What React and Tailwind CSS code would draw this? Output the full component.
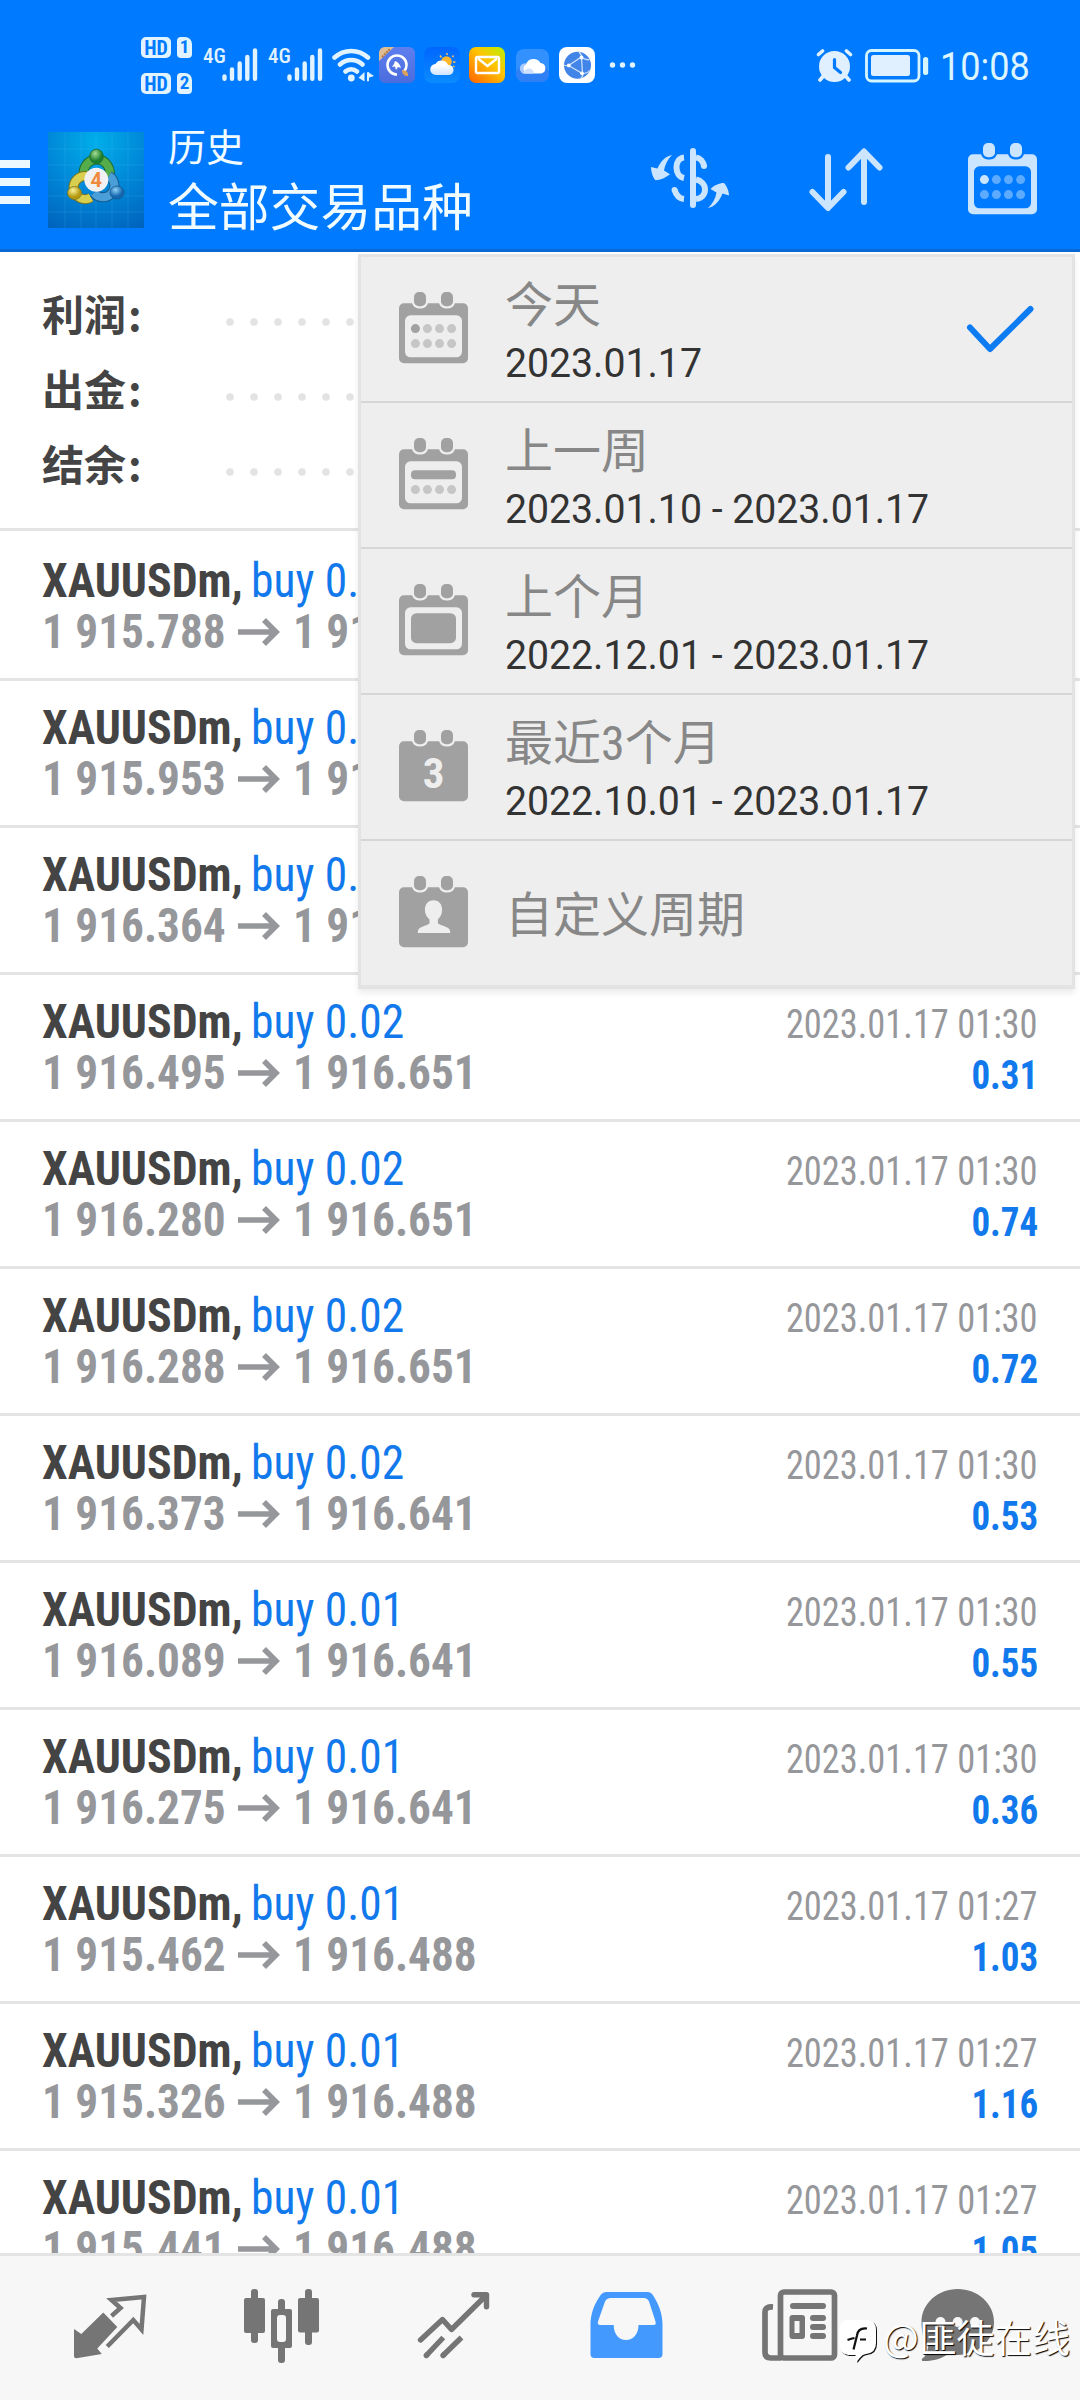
const trades = [
  ["0.02", "1 915.788", "1 916.651", "2023.01.17 01:30", "0.86"],
  ["0.02", "1 915.953", "1 916.651", "2023.01.17 01:30", "0.69"],
  ["0.02", "1 916.364", "1 916.651", "2023.01.17 01:30", "0.57"],
  ["0.02", "1 916.495", "1 916.651", "2023.01.17 01:30", "0.31"],
  ["0.02", "1 916.280", "1 916.651", "2023.01.17 01:30", "0.74"],
  ["0.02", "1 916.288", "1 916.651", "2023.01.17 01:30", "0.72"],
  ["0.02", "1 916.373", "1 916.641", "2023.01.17 01:30", "0.53"],
  ["0.01", "1 916.089", "1 916.641", "2023.01.17 01:30", "0.55"],
  ["0.01", "1 916.275", "1 916.641", "2023.01.17 01:30", "0.36"],
  ["0.01", "1 915.462", "1 916.488", "2023.01.17 01:27", "1.03"],
  ["0.01", "1 915.326", "1 916.488", "2023.01.17 01:27", "1.16"],
  ["0.01", "1 915.441", "1 916.488", "2023.01.17 01:27", "1.05"],
];

const periods = [
  ["day", "今天", "2023.01.17"],
  ["week", "上一周", "2023.01.10 - 2023.01.17"],
  ["month", "上个月", "2022.12.01 - 2023.01.17"],
  ["three", "最近3个月", "2022.10.01 - 2023.01.17"],
  ["custom", "自定义周期", null],
];

function Calendar({ kind, color, dim, bg }) {
  const solid = kind === "three" || kind === "custom";
  return (
    <svg viewBox="0 0 69 72" className="h-[72px] w-[69px] shrink-0">
      <rect x="0" y="11.3" width="69" height="60" rx="5" fill={color} />
      <g fill={color} stroke={bg} strokeWidth="4.4" paintOrder="stroke">
        <rect x="15" y="0" width="12" height="14.3" rx="5" />
        <rect x="42" y="0" width="12" height="14.3" rx="5" />
      </g>
      {!solid && <rect x="6" y="23.3" width="57" height="42" rx="5.5" fill={bg} />}
      {kind === "day" && (
        <g fill={dim}>
          <circle cx="16.4" cy="36.6" r="4.5" fill={color} />
          <circle cx="28.4" cy="36.6" r="4.5" />
          <circle cx="40.5" cy="36.6" r="4.5" />
          <circle cx="52.6" cy="36.6" r="4.5" />
        </g>
      )}
      {kind === "week" && <rect x="12" y="32.2" width="45" height="9" rx="4" fill={color} />}
      {(kind === "day" || kind === "week") && (
        <g fill={dim}>
          <circle cx="16.4" cy="51.6" r="4.5" />
          <circle cx="28.4" cy="51.6" r="4.5" />
          <circle cx="40.5" cy="51.6" r="4.5" />
          <circle cx="52.6" cy="51.6" r="4.5" />
        </g>
      )}
      {kind === "month" && <rect x="12" y="29.2" width="45" height="30" rx="5.5" fill={color} />}
      {kind === "three" && (
        <text x="34.5" y="57.5" textAnchor="middle" fontSize="43" fill={bg} className="font-[Roboto] font-bold [font-stretch:75%]">3</text>
      )}
      {kind === "custom" && (
        <path
          d="M34.5 24.2c5.5 0 8.6 4 8.6 9.6 0 4.6-1.8 7.2-4.2 9.6v4.2c3.6 2.5 12.3 3.2 12.3 8v1.5H18.8v-1.5c0-4.8 8.7-5.5 11.7-8v-4.2c-2.6-2.4-4.6-5-4.6-9.6 0-5.6 3.100-9.600 8.600-9.600z"
          fill={bg}
        />
      )}
    </svg>
  );
}

function HdBadge({ n }) {
  return (
    <div className="flex gap-[6px] font-[Roboto] text-[#007aff]">
      <div className="flex h-[21px] w-[30px] items-center justify-center rounded-[5px] bg-[#e0f3ff] text-[20px] font-bold [font-stretch:75%]">HD</div>
      <div className="flex h-[21px] w-[15px] items-center justify-center rounded-[4px] rounded-tr-[7px] bg-[#e0f3ff] text-[19px] font-bold [font-stretch:75%]">{n}</div>
    </div>
  );
}

function Signal() {
  return (
    <div className="flex h-[34px] w-[53px]">
      <span className="ml-[-1px] w-[19px] font-[Roboto] text-[21px] leading-[16px] font-medium whitespace-nowrap text-[#e0f3ff] [font-stretch:75%]">4G</span>
      <svg viewBox="222 48 36 34" className="h-[34px] w-[36px] shrink-0" stroke="#e0f3ff" strokeWidth="4.4" strokeLinecap="round">
        <path d="M224.5 76.500v2.300M232 69.500v9.300M239.700 63.500v15.300M247.300 57v21.800M255 50.500v28.300" />
      </svg>
    </div>
  );
}

function StatusBar() {
  return (
    <div className="flex h-[130px] items-start pl-[141px]">
      <div className="mt-[37px] flex w-[63px] flex-col gap-[15px]">
        <HdBadge n="1" />
        <HdBadge n="2" />
      </div>
      <div className="mt-[48px] flex gap-[12px]">
        <Signal />
        <Signal />
      </div>
      <svg viewBox="332 48 42 34" className="mt-[48px] ml-[10px] h-[34px] w-[42px]" fill="none" stroke="#e0f3ff" strokeWidth="4.5" strokeLinecap="round">
        <path d="M334.500 57.500a24.500 24.500 0 0 1 33.500 0M340 64.500a16.500 16.500 0 0 1 22.500 0M345.500 71.500a8.500 8.500 0 0 1 11.500 0" />
        <circle cx="351.3" cy="78" r="3.4" fill="#e0f3ff" stroke="none" />
        <path d="M364.500 72v9.500l-6-3.700zM368 72l6 4-6 2z" fill="#e0f3ff" stroke="none" />
        <path d="M368 73v7.500" strokeWidth="2" />
      </svg>

      <svg viewBox="379 47 36 36" className="mt-[47px] ml-[5px] h-[36px] w-[36px]">
        <defs>
          <linearGradient id="browser" x1="0" y1="0" x2="0" y2="1">
            <stop offset="0" stopColor="#5f7ff0" />
            <stop offset="1" stopColor="#4a6cdc" />
          </linearGradient>
          <clipPath id="browserClip"><rect x="379" y="47" width="36" height="36" rx="6" /></clipPath>
        </defs>
        <rect x="379" y="47" width="36" height="36" rx="6" fill="url(#browser)" />
        <path d="M379 47h15l-15 14z" fill="#e0bd94" clipPath="url(#browserClip)" />
        <path d="M382 57l8-8" stroke="#b0793c" strokeWidth="2" strokeDasharray="2 1" />
        <path d="M397 74.500a9.500 9.500 0 1 1 9.500-9.500c0 3-1 5-2.500 6.500" fill="none" stroke="#fff" strokeWidth="2.6" />
        <path d="M395 61c3 1 5 3.500 6 7l-3-1-2 3-1-3.500-3 .5 2-3z" fill="#fff" />
        <path d="M402 70c4 0 6.500 2 6 6-4 0-6-2-6-6z" fill="#dba25a" />
      </svg>
      <svg viewBox="424 47 36 36" className="mt-[47px] ml-[9px] h-[36px] w-[36px]">
        <defs>
          <linearGradient id="weather" x1="0" y1="0" x2="0" y2="1">
            <stop offset="0" stopColor="#0066ff" />
            <stop offset="1" stopColor="#0a8cff" />
          </linearGradient>
          <linearGradient id="cloud" x1="0" y1="0" x2="0" y2="1">
            <stop offset=".3" stopColor="#fff" />
            <stop offset="1" stopColor="#cfe4ff" />
          </linearGradient>
        </defs>
        <rect x="424" y="47" width="36" height="36" rx="8" fill="url(#weather)" />
        <path d="M447 53v2M453.500 55.500l-1 1.500M455.500 62h-2.500M440 55.500l1.500 2M454.500 67l-1.500-1" stroke="#ffc34d" strokeWidth="1.4" />
        <circle cx="446.5" cy="61.5" r="5.3" fill="#ffb62e" />
        <path d="M436 75a5.500 5.500 0 0 1-.5-11 7 7 0 0 1 12.500 1 5 5 0 0 1 1 10z" fill="url(#cloud)" />
      </svg>
      <svg viewBox="469 47 36 36" className="mt-[47px] ml-[9px] h-[36px] w-[36px]">
        <defs>
          <linearGradient id="mail" x1="1" y1="0" x2=".1" y2="1">
            <stop offset="0" stopColor="#b8f000" />
            <stop offset=".45" stopColor="#ffc400" />
            <stop offset="1" stopColor="#ff6a00" />
          </linearGradient>
        </defs>
        <rect x="469" y="47" width="36" height="36" rx="7" fill="url(#mail)" />
        <rect x="476" y="57" width="23" height="16" rx="1.5" fill="none" stroke="#fff" strokeWidth="2.4" />
        <path d="M478 58.500l9.500 7.500 9.500-7.500" fill="none" stroke="#fff" strokeWidth="2.4" />
      </svg>
      <svg viewBox="516 49 33 33" className="mt-[49px] ml-[11px] h-[33px] w-[33px]">
        <rect x="516" y="49" width="33" height="33" rx="8" fill="#3391ff" />
        <rect x="516" y="66" width="33" height="16" rx="8" fill="#2f80f5" />
        <circle cx="525" cy="68.5" r="5.2" fill="#a9cbff" />
        <path d="M527 73.500a5 5 0 0 1-1-9 8 8 0 0 1 14.500-1.500 5.300 5.300 0 0 1 .5 10.500z" fill="#fff" />
        <path d="M523 73.500c2-6 9-7 11-1l-1 1z" fill="#cfe0ff" />
      </svg>
      <svg viewBox="559 47 36 36" className="mt-[47px] ml-[10px] h-[36px] w-[36px]">
        <rect x="559" y="47" width="36" height="36" rx="8" fill="#fff" />
        <circle cx="577.5" cy="65.3" r="13.5" fill="#4285e8" />
        <path d="M568.500 65.500l13-8.500 1 16.500zM579 52q3 3 2.500 5.500 5 3 8 2M568.500 65.500q-4 .5-5-1M582.500 73.500q1 3-2 5M582.500 73.500q5 0 7-3" fill="none" stroke="#c9defb" strokeWidth="1.3" />
        <g fill="#fff"><circle cx="568.8" cy="65.4" r="1.9" /><circle cx="581.5" cy="57.5" r="1.9" /><circle cx="582" cy="73.3" r="1.9" /></g>
      </svg>
      <svg viewBox="608 60 30 10" className="mt-[60px] ml-[13px] h-[10px] w-[30px]" fill="#e0f3ff">
        <circle cx="612.5" cy="65" r="2.7" /><circle cx="622.5" cy="65" r="2.7" /><circle cx="632.5" cy="65" r="2.7" />
      </svg>

      <svg viewBox="816 48 37 35" className="mt-[48px] ml-[178px] h-[35px] w-[37px]" fill="none" strokeLinecap="round">
        <circle cx="834.5" cy="66.5" r="15.5" fill="#e0f0ff" />
        <path d="M834.500 59.500v8l6 5" stroke="#007aff" strokeWidth="3.2" />
        <path d="M818.500 54.500l4-3.500M850.500 54.500l-4-3.500M823 76.500l-3 3.500M846 76.500l3 3.500" stroke="#e0f0ff" strokeWidth="3.6" />
      </svg>
      <svg viewBox="865 48 64 35" className="mt-[48px] ml-[12px] h-[35px] w-[64px]">
        <rect x="866.5" y="50.5" width="52.5" height="30.5" rx="5" fill="none" stroke="#d5f5ff" strokeWidth="2.8" />
        <rect x="871" y="55" width="39" height="21" rx="2.5" fill="#e0f0ff" />
        <rect x="923" y="57" width="5.2" height="18" rx="2.5" fill="#d5f5ff" />
      </svg>
      <div className="mt-[43px] ml-[11px] origin-left scale-x-[0.95] font-[Roboto] text-[38px] leading-[49px] whitespace-nowrap text-[#dcf5ff]">10:08</div>
    </div>
  );
}

function AppLogo() {
  return (
    <svg viewBox="0 0 96 96" className="h-[96px] w-[96px]">
      <defs>
        <radialGradient id="logoBg" cx=".5" cy=".1" r="1">
          <stop offset="0" stopColor="#00aeea" />
          <stop offset=".5" stopColor="#0088d8" />
          <stop offset="1" stopColor="#0064be" />
        </radialGradient>
        <radialGradient id="g" cx=".4" cy=".3"><stop offset="0" stopColor="#a5dc94" /><stop offset="1" stopColor="#1d7f2e" /></radialGradient>
        <radialGradient id="y" cx=".4" cy=".3"><stop offset="0" stopColor="#fbf49b" /><stop offset="1" stopColor="#b79a12" /></radialGradient>
        <radialGradient id="b" cx=".4" cy=".3"><stop offset="0" stopColor="#8fd0f5" /><stop offset="1" stopColor="#1466b0" /></radialGradient>
      </defs>
      <rect width="96" height="96" fill="url(#logoBg)" />
      <path d="M0 17h96M0 33h96M0 48h96M0 64h96M0 80h96M17 0v96M33 0v96M48 0v96M64 0v96M80 0v96" stroke="#5cc8ff" strokeOpacity=".16" strokeWidth="1" />
      <g fill="none">
        <path d="M36.500 45a13 13 0 1 1 24 1" stroke="#1d6a2c" strokeWidth="10" />
        <path d="M36.500 45a13 13 0 1 1 24 1" stroke="#55ac4a" strokeWidth="8" />
        <path d="M43 65.500a11.500 11.500 0 1 1-3-21" stroke="#7c7420" strokeWidth="10" />
        <path d="M43 65.500a11.500 11.500 0 1 1-3-21" stroke="#d8cf4e" strokeWidth="8" />
        <path d="M61 44a11.500 11.500 0 1 1-15 17" stroke="#17598f" strokeWidth="10" />
        <path d="M61 44a11.500 11.500 0 1 1-15 17" stroke="#4a9fd8" strokeWidth="8" />
      </g>
      <ellipse cx="48.5" cy="24.5" rx="6.8" ry="7.3" fill="url(#g)" stroke="#1d6a2c" strokeWidth=".8" />
      <ellipse cx="26.5" cy="61" rx="7" ry="6.500" fill="url(#y)" stroke="#7c7420" strokeWidth=".8" />
      <ellipse cx="69" cy="60.5" rx="7" ry="6.500" fill="url(#b)" stroke="#17598f" strokeWidth=".8" />
      <circle cx="48.3" cy="47.7" r="12" fill="#f1f1f4" />
      <text x="48.3" y="55" textAnchor="middle" fontSize="20" fill="#f08a3c" className="font-[Roboto] font-bold">4</text>
    </svg>
  );
}

function Toolbar() {
  return (
    <div className="flex h-[119px] items-start">
      <div className="mt-[30px] flex w-[48px] flex-col gap-[10px]">
        <div className="h-[8px] w-[30px] bg-[#ecf8ff]" />
        <div className="h-[8px] w-[30px] bg-[#ecf8ff]" />
        <div className="h-[8px] w-[30px] bg-[#ecf8ff]" />
      </div>
      <div className="mt-[2px]"><AppLogo /></div>
      <div className="ml-[24px] w-[483px] font-[Roboto,'Noto_Sans_CJK_SC',sans-serif] whitespace-nowrap text-[#f0fcff]">
        <div className="mt-[-8px] text-[38px] leading-[52px]">历史</div>
        <div className="mt-[5px] text-[50.8px] leading-[60px]">全部交易品种</div>
      </div>
      <svg viewBox="650 147 81 63" className="mt-[17px] ml-[-1px] h-[63px] w-[81px]" fill="none" stroke="#cbe5ff" strokeWidth="6">
        <path d="M693 151v54" strokeLinecap="round" />
        <path d="M684 157.500c-5 .5-7.500 5-7.500 10s2.500 9.500 7.500 10.500M674.500 189.500c1.500 5.500 4.500 9 9.500 9.500" />
        <circle cx="674.500" cy="190" r="2.9" fill="#cbe5ff" stroke="none" />
        <path d="M696 157.500c4 .5 7.500 4 8 9M696 179.500c5 1 9 5 9 10s-3.500 9-9 9.500" />
        <circle cx="704" cy="166" r="3" fill="#cbe5ff" stroke="none" />
        <path d="M672 155c-7 1.500-11.500 6.500-14.500 13.500l-6.500-1.500c0 4 1.500 10 4.500 13.300 5-.3 10.500-2.600 14.500-6l-6-3.800c1-6 3.500-11 8-15.500z" fill="#cbe5ff" stroke="none" />
        <path d="M708 208c7-1.500 11.500-7 14.500-14.500l6.500 2c0-4-2-9.500-5-12.500-5 0-10 2.500-13.500 6l6 3.500c-1 6-4 11.500-8.500 15.500z" fill="#cbe5ff" stroke="none" />
      </svg>
      <svg viewBox="808 146 76 66" className="mt-[16px] ml-[77px] h-[66px] w-[76px]" fill="none" stroke="#cbe5ff" strokeWidth="6" strokeLinecap="round" strokeLinejoin="round">
        <path d="M828 157v50M812.500 192l15.500 16 15.500-16M864 202v-50M848.500 167.500l15.500-16 15.500 16" />
      </svg>
      <div className="mt-[12.500px] ml-[84px]">
        <Calendar kind="day" color="#cbe5ff" dim="#5cabff" bg="#007aff" />
      </div>
    </div>
  );
}

function SummaryRow({ label }) {
  return (
    <div className="flex h-[75px] items-center">
      <span className="w-[184px] font-['Noto_Sans_CJK_SC',sans-serif] text-[42px] leading-[75px] font-bold text-[#444]">
        {label}<span className="ml-[2px]">:</span>
      </span>
      <svg viewBox="0 0 808 8" className="mt-[19px] h-[8px] w-[808px]">
        <path d="M4 4h804" stroke="#e3e3e3" strokeWidth="7.6" strokeLinecap="round" strokeDasharray="0 24" />
      </svg>
    </div>
  );
}

function TradeRow({ t }) {
  const [lot, open, close, time, profit] = t;
  return (
    <div className="h-[147px] shrink-0 border-b-[3px] border-[#e4e4e4] pt-[21px] pr-[42px] pl-[42px] font-[Roboto] text-[48px] leading-[51px] whitespace-nowrap [font-stretch:75%]">
      <div className="flex h-[51px] items-baseline">
        <span className="w-[208.500px] font-bold text-[#444]"><span className="inline-block origin-left scale-x-[0.955]">XAUUSDm,</span></span>
        <span className="inline-block origin-left scale-x-[0.948] text-[#1279ec]">buy {lot}</span>
        <span className="ml-auto inline-block origin-right scale-x-[0.91] text-[40px] text-[#96979b]">{time}</span>
      </div>
      <div className="flex h-[51px] items-baseline font-bold text-[#96979b]">
        <span className="w-[196px]"><span className="inline-block origin-left scale-x-[0.943]">{open}</span></span>
        <svg viewBox="0 0 42 28" className="h-[28px] w-[42px] translate-y-[-2px]" fill="none" stroke="#96979b" strokeWidth="5.6"><path d="M0 14h38M26 2l12 12-12 12" /></svg>
        <span className="ml-[13px] inline-block origin-left scale-x-[0.943]">{close}</span>
        <span className="ml-auto inline-block origin-right scale-x-[0.925] text-[40px] text-[#1279ec]">{profit}</span>
      </div>
    </div>
  );
}

function PeriodMenu() {
  return (
    <div className="absolute top-[254px] left-[358px] w-[717px] border-x-[3px] border-t-[3px] border-b-[4px] border-[#e3e3e3] bg-[#eee] shadow-[0_4px_6px_rgba(0,0,0,0.08)]">
      {periods.map(([kind, title, range], i) => (
        <div key={kind} className={"flex items-start border-[#d6d6d6] pl-[38px] font-[Roboto,'Noto_Sans_CJK_SC',sans-serif] whitespace-nowrap " + (i < 4 ? "h-[146px] border-b-2" : "h-[144px]")}>
          <div className="mt-[34.700px]"><Calendar kind={kind} color="#a1a1a1" dim="#c6c6c6" bg="#eeeeee" /></div>
          <div className="ml-[37px] w-[461px]">
            {range ? (
              <>
                <div className="mt-[19px] text-[48px] leading-[60px] text-[#878787] [font-stretch:75%]">{title}</div>
                <div className="w-max origin-left scale-x-[0.98] text-[40px] leading-[56px] text-[#333]">{range}</div>
              </>
            ) : (
              <div className="mt-[3px] text-[48px] leading-[144px] text-[#878787]">{title}</div>
            )}
          </div>
          {i === 0 && (
            <svg viewBox="966 304 68 50" className="mt-[47px] h-[50px] w-[68px]" fill="none" stroke="#0d7bf2" strokeWidth="6" strokeLinecap="round" strokeLinejoin="round">
              <path d="M970 327.500l20 21.500 40.500-40" />
            </svg>
          )}
        </div>
      ))}
    </div>
  );
}

function BottomNav() {
  return (
    <div className="flex h-[147px] items-start border-t-[3px] border-[#e4e4e4] bg-[#f7f7f7] pt-[30px] pl-[72px]">
      <svg viewBox="72 2286 76 80" className="h-[80px] w-[76px]">
        <path d="M74 2329l7.300 5 22-21.500 14 14.500-20 21.500 4.500 5.500-25.400 4.300q-2.400 0-2.400-2z" fill="#757575" />
        <path d="M111.500 2316l9-8-9-8 32.500-3-2.500 32.500-8.200-9.500-26 26.500" fill="none" stroke="#757575" strokeWidth="4.5" />
      </svg>
      <svg viewBox="242 2286 79 80" className="ml-[94px] h-[80px] w-[79px]" fill="#757575">
        <rect x="244" y="2298" width="21" height="35" rx="2" /><rect x="251" y="2289" width="7" height="54" rx="3" />
        <rect x="278" y="2299" width="7" height="64" rx="3" /><rect x="271" y="2309" width="21" height="39" rx="2" />
        <rect x="277" y="2315" width="9" height="27" rx="3" fill="#f7f7f7" />
        <rect x="298" y="2298" width="21" height="34.5" rx="2" /><rect x="305" y="2289" width="7" height="56" rx="3" />
      </svg>
      <svg viewBox="415 2286 78 80" className="ml-[94px] h-[80px] w-[78px]" fill="none" stroke="#757575" strokeWidth="5.4" strokeLinecap="round" strokeLinejoin="round">
        <path d="M420.500 2340l22-20.500 9 10 35-34.500M474 2294.700h12.500v12" />
        <path d="M426.300 2355.500l17-18M443 2355.500l18.500-18" strokeLinecap="butt" />
        <path d="M426.300 2355.500l1-1M443 2355.500l1-1" />
      </svg>
      <svg viewBox="588 2286 77 80" className="ml-[95px] h-[80px] w-[77px]">
        <path d="M606 2292h42q3 0 4.500 2.500c6 9 10 19 10 30v29.500q0 4-4 4h-64q-4 0-4-4v-29.500c0-11 4-21 10.500-30q2-2.500 5-2.500z" fill="#4499ff" />
        <path d="M611 2298h33q3.500 0 5 3.500l6.500 20q1 3.500-2 3.500h-15c0 9-5.500 15-12.500 15s-12.300-6-12.300-15h-13.200q-3.500 0-2.500-3.500l7-20q1.500-3.500 6-3.500z" fill="#f7f7f7" />
      </svg>
      <svg viewBox="760 2286 80 80" className="ml-[95px] h-[80px] w-[80px]" fill="none" stroke="#757575" strokeWidth="5.7">
        <rect x="780.5" y="2292" width="54" height="66" rx="3.5" />
        <path d="M773 2307q-8-.5-8 5v40q0 6 6 6h10" />
        <g fill="#757575" stroke="none">
          <rect x="790" y="2303" width="36" height="6" rx="3" /><rect x="810" y="2315" width="16" height="6" rx="3" />
          <rect x="810" y="2324" width="16" height="6" rx="3" /><rect x="810" y="2333" width="16" height="6" rx="3" />
          <rect x="789.5" y="2315" width="15.5" height="24" rx="3" />
        </g>
        <rect x="794.5" y="2321" width="5" height="12" fill="#f7f7f7" stroke="none" />
      </svg>
      <svg viewBox="920 2286 76 80" className="ml-[80px] h-[80px] w-[76px]" fill="#757575">
        <path d="M957.700 2289c20 0 36.300 14.500 36.300 33s-16 33-36.300 33q-5 0-9.500-1c-7 5-16 7.500-26 7l-.5-2q5-2.500 6.500-12c-4-6-6.700-14-6.700-25 0-18.500 16.500-33 36.200-33z" />
        <g fill="#f7f7f7"><circle cx="940.5" cy="2322" r="5" /><circle cx="957.7" cy="2322" r="5" /><circle cx="975" cy="2322" r="5" /></g>
      </svg>
    </div>
  );
}

function Watermark() {
  return (
    <div className="absolute top-[2308px] left-[839px] flex items-start">
      <svg viewBox="839 2318 40 48" className="mt-[10px] h-[48px] w-[40px]">
        <path d="M848 2321h20q9 0 9 10v13q0 10-10 11c-5 1-6 4-9.500 8l-1-7h-7q-9-1-9-11v-14q0-10 7.500-10z" fill="#111" />
        <path d="M847 2320h20q9 0 9 10v13q0 10-10 11c-5 1-6 4-9.500 8l-1-7h-7q-9-1-9-11v-14q0-10 7.500-10z" fill="#fff" />
        <path d="M867 2328.500q-9-1-10 7l-3.500 14M847.500 2340q4-1.500 7-2M860 2339.500h6" fill="none" stroke="#111" strokeWidth="2.2" />
      </svg>
      <span className="ml-[4px] font-['Noto_Sans_CJK_SC',sans-serif] text-[37.800px] leading-[55px] whitespace-nowrap text-white [text-shadow:1px_1px_1px_#000]">@匪徒在线</span>
    </div>
  );
}

export default function App() {
  return (
    <div className="relative flex h-[2400px] w-[1080px] flex-col overflow-hidden bg-white">
      <header className="h-[252px] shrink-0 border-b-[3px] border-[#0a68d2] bg-[#007aff]">
        <StatusBar />
        <Toolbar />
      </header>
      <main className="flex min-h-0 flex-1 flex-col overflow-hidden">
        <section className="mb-[3px] h-[279px] shrink-0 border-b-[3px] border-[#e4e4e4] pt-[23px] pl-[42px]">
          <SummaryRow label="利润" />
          <SummaryRow label="出金" />
          <SummaryRow label="结余" />
        </section>
        {trades.map((t, i) => <TradeRow key={i} t={t} />)}
      </main>
      <BottomNav />
      <PeriodMenu />
      <Watermark />
    </div>
  );
}
